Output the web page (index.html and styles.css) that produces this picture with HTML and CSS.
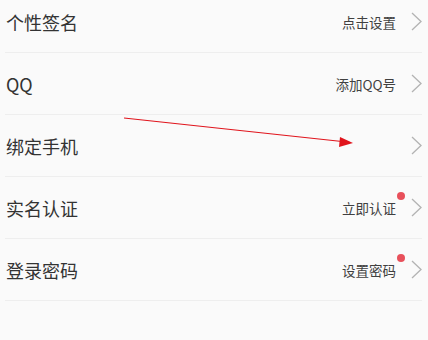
FILE: index.html
```html
<!DOCTYPE html>
<html lang="zh">
<head>
<meta charset="utf-8">
<link rel="stylesheet" href="styles.css">
</head>
<body>
<div class="list">
  <div class="row"><span class="label">个性签名</span><span class="value">点击设置</span><svg class="chev" viewBox="0 0 11 19"><polyline points="1,1 10,9.5 1,18"/></svg></div>
  <div class="row"><span class="label">QQ</span><span class="value">添加QQ号</span><svg class="chev" viewBox="0 0 11 19"><polyline points="1,1 10,9.5 1,18"/></svg></div>
  <div class="row"><span class="label">绑定手机</span><span class="value"></span><svg class="chev" viewBox="0 0 11 19"><polyline points="1,1 10,9.5 1,18"/></svg></div>
  <div class="row"><span class="label">实名认证</span><span class="value dot">立即认证</span><svg class="chev" viewBox="0 0 11 19"><polyline points="1,1 10,9.5 1,18"/></svg></div>
  <div class="row"><span class="label">登录密码</span><span class="value dot">设置密码</span><svg class="chev" viewBox="0 0 11 19"><polyline points="1,1 10,9.5 1,18"/></svg></div>
</div>
<svg class="arrow" width="428" height="340" viewBox="0 0 428 340">
  <line x1="124" y1="118" x2="342" y2="141.5"/>
  <polygon points="353,143 340,137 339,147"/>
</svg>
</body>
</html>
```
FILE: styles.css
```css
html, body {
  margin: 0;
  padding: 0;
  background: #fafafa;
}
body {
  width: 428px;
  height: 340px;
  overflow: hidden;
  position: relative;
  font-family: "Noto Sans CJK SC", "Noto Sans", sans-serif;
}
.list {
  margin: -9px 6px 0 5px;
}
.row {
  height: 61px;
  border-bottom: 1px solid #eeeeee;
  display: flex;
  align-items: center;
}
.label {
  flex: 1;
  font-size: 18px;
  color: #333333;
  padding-left: 1px;
}
.value {
  font-size: 13.5px;
  color: #404040;
  position: relative;
}
.value.dot::after {
  content: "";
  position: absolute;
  right: -9px;
  top: -6px;
  width: 8px;
  height: 8px;
  border-radius: 50%;
  background: #e8505b;
}
.chev {
  width: 11px;
  height: 19px;
  margin-left: 15px;
  margin-right: 0;
}
.chev polyline {
  fill: none;
  stroke: #b3b3b3;
  stroke-width: 1.3;
}
.arrow {
  position: absolute;
  left: 0;
  top: 0;
  pointer-events: none;
}
.arrow line {
  stroke: #e0141c;
  stroke-width: 1.2;
}
.arrow polygon {
  fill: #e0141c;
}
```
